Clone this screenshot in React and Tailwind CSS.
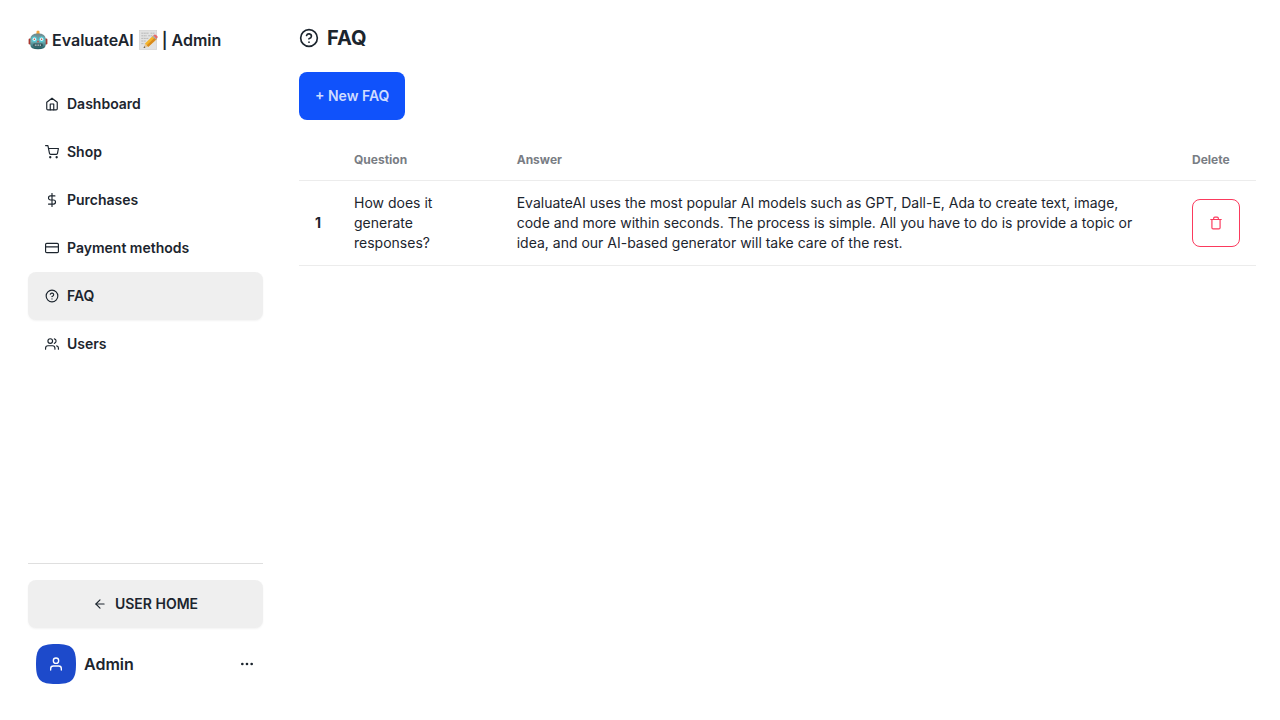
import {
  FiHome,
  FiShoppingCart,
  FiDollarSign,
  FiCreditCard,
  FiHelpCircle,
  FiUsers,
  FiUser,
  FiArrowLeft,
  FiMoreHorizontal,
  FiTrash,
} from "react-icons/fi";

const links = [
  { label: "Dashboard", icon: FiHome },
  { label: "Shop", icon: FiShoppingCart },
  { label: "Purchases", icon: FiDollarSign },
  { label: "Payment methods", icon: FiCreditCard },
  { label: "FAQ", icon: FiHelpCircle, active: true },
  { label: "Users", icon: FiUsers },
];

const faqs = [
  {
    question: "How does it generate responses?",
    answer:
      "EvaluateAI uses the most popular AI models such as GPT, Dall-E, Ada to create text, image, code and more within seconds. The process is simple. All you have to do is provide a topic or idea, and our AI-based generator will take care of the rest.",
  },
];

function Robot() {
  return (
    <svg viewBox="0 0 20 20" className="size-5 shrink-0" aria-hidden="true">
      <defs>
        <linearGradient id="robot-face" x1="0" y1="0" x2="0" y2="1">
          <stop offset="0" stopColor="#6d868b" />
          <stop offset="0.5" stopColor="#6fb3b8" />
          <stop offset="1" stopColor="#1f555b" />
        </linearGradient>
      </defs>
      <path d="M8.2 4 8.8 1.2Q10 -.2 11.2 1.2L11.8 4Z" fill="#f0a23c" />
      <rect x="0.6" y="8.6" width="3.2" height="5.8" rx="1.2" fill="#a8382f" />
      <rect x="16.2" y="8.6" width="3.2" height="5.8" rx="1.2" fill="#a8382f" />
      <path d="M2.3 9Q2.3 3.4 10 3.4T17.7 9V15Q17.4 19.3 10 19.3T2.3 15Z" fill="url(#robot-face)" />
      <circle cx="6.4" cy="9.2" r="2.7" fill="#4fc9d6" />
      <circle cx="13.6" cy="9.2" r="2.7" fill="#4fc9d6" />
      <circle cx="6.4" cy="9.2" r="1.7" fill="#e9fbfa" />
      <circle cx="13.6" cy="9.2" r="1.7" fill="#e9fbfa" />
      <circle cx="6.4" cy="9.2" r="0.8" fill="#b5544c" />
      <circle cx="13.6" cy="9.2" r="0.8" fill="#b5544c" />
      <path d="m10 10.3 1.2 2H8.8Z" fill="#c4473e" />
      <rect x="5.2" y="13.6" width="9.6" height="2.9" rx="1.3" fill="#31545a" />
      <path d="M6.8 15.1h6.6" stroke="#d9e4e4" strokeWidth="1.2" strokeDasharray="1 .7" />
    </svg>
  );
}

function Memo() {
  return (
    <svg viewBox="0 0 20 20" className="size-5 shrink-0" aria-hidden="true">
      <rect x="1.3" y="0.4" width="17.4" height="19.2" fill="#e2e2e2" stroke="#cfcfcf" strokeWidth="0.6" />
      <path
        d="M3.3 3.2H11M12.5 3.2h4M3.3 5.8H9M10.2 5.8h4M3.3 8.4h7M3.3 11h5M3.3 13.6h3"
        stroke="#b4b4b4"
        strokeWidth="0.9"
        strokeDasharray="2 .5"
      />
      <path d="m5.6 18 1.6-4.8 3.3 3.2Z" fill="#e5c69b" />
      <path d="m5.6 18 .6-1.8 1.2 1.2Z" fill="#444" />
      <path d="m7 13.4 8.2-7.8 3.6 3.3-8.4 7.9Z" fill="#f4b52c" />
      <path d="m8.8 15.2 8.3-7.9 1.7 1.6-8.4 7.9Z" fill="#d98a1e" />
      <path d="m14.4 6.4 1-1 3.4 3.2-1 1Z" fill="#9bb0bd" />
      <path d="m15.3 5.5.8-.8q1-.7 2 .3l1.1 1q.9 1 .1 2l-.6.7Z" fill="#e7696b" />
    </svg>
  );
}

function Sidebar() {
  return (
    <aside className="flex w-[291px] shrink-0 flex-col px-7 pt-5 pb-7">
      <a href="#" className="flex h-10 items-center gap-1 font-semibold">
        <Robot />
        <span>EvaluateAI</span>
        <Memo />
        <span>| Admin</span>
      </a>
      <nav className="mt-5 flex flex-col">
        {links.map(({ label, icon: Icon, active }) => (
          <a
            key={label}
            href="#"
            aria-current={active ? "page" : undefined}
            className={
              "flex h-12 items-center gap-2 rounded-lg px-[17px] text-sm font-semibold " +
              (active ? "bg-[#efefef] shadow-[0_1px_2px_0_rgb(0_0_0/0.05)]" : "")
            }
          >
            <Icon className="size-3.5" />
            {label}
          </a>
        ))}
      </nav>
      <div className="mt-auto border-t border-[#dfdfdf] pt-4">
        <a
          href="#"
          className="flex h-12 items-center justify-center gap-2 rounded-lg bg-[#efefef] text-sm font-semibold shadow-[0_1px_2px_0_rgb(0_0_0/0.05)]"
        >
          <FiArrowLeft className="size-3.5" />
          USER HOME
        </a>
        <button type="button" className="mt-2 flex w-full items-center gap-2 p-2 font-semibold">
          <span className="grid size-10 place-items-center text-white">
            <svg viewBox="0 0 200 200" className="col-start-1 row-start-1 size-10" aria-hidden="true">
              <path
                d="M100 0C20 0 0 20 0 100s20 100 100 100 100-20 100-100S180 0 100 0Z"
                fill="#1d4acb"
              />
            </svg>
            <FiUser className="col-start-1 row-start-1 size-4" />
          </span>
          Admin
          <FiMoreHorizontal className="ml-auto size-4" />
        </button>
      </div>
    </aside>
  );
}

export default function App() {
  return (
    <div className="flex min-h-screen bg-white font-['Inter',sans-serif] text-[#1c252e]">
      <Sidebar />
      <main className="min-w-0 flex-1 pt-6 pr-6 pl-2">
        <h1 className="flex items-center gap-2 text-xl font-bold">
          <FiHelpCircle className="size-5" />
          FAQ
        </h1>
        <button
          type="button"
          className="mt-5 flex h-12 items-center rounded-lg bg-[#1052fb] px-4 text-sm font-semibold text-[#cfdcff]"
        >
          + New FAQ
        </button>
        <table className="mt-5 w-full table-fixed text-left text-sm">
          <colgroup>
            <col className="w-[39px]" />
            <col className="w-[17%]" />
            <col />
            <col className="w-20" />
          </colgroup>
          <thead className="text-xs text-[#797d84]">
            <tr className="border-b border-[#ececec]">
              <th className="py-3" aria-label="Number" />
              <th className="px-4 py-3 font-bold">Question</th>
              <th className="px-4 py-3 font-bold">Answer</th>
              <th className="px-4 py-3 font-bold">Delete</th>
            </tr>
          </thead>
          <tbody>
            {faqs.map((faq, i) => (
              <tr key={faq.question} className="border-b border-[#ececec]">
                <th className="py-3 pl-4 font-bold">{i + 1}</th>
                <td className="py-3 pr-12 pl-4">{faq.question}</td>
                <td className="py-3 pr-9 pl-4">{faq.answer}</td>
                <td className="px-4">
                  <button
                    type="button"
                    aria-label="Delete question"
                    className="grid size-12 place-items-center rounded-lg border border-[#fb3a5d] text-[#fb3a5d]"
                  >
                    <FiTrash className="size-3.5" />
                  </button>
                </td>
              </tr>
            ))}
          </tbody>
        </table>
      </main>
    </div>
  );
}
